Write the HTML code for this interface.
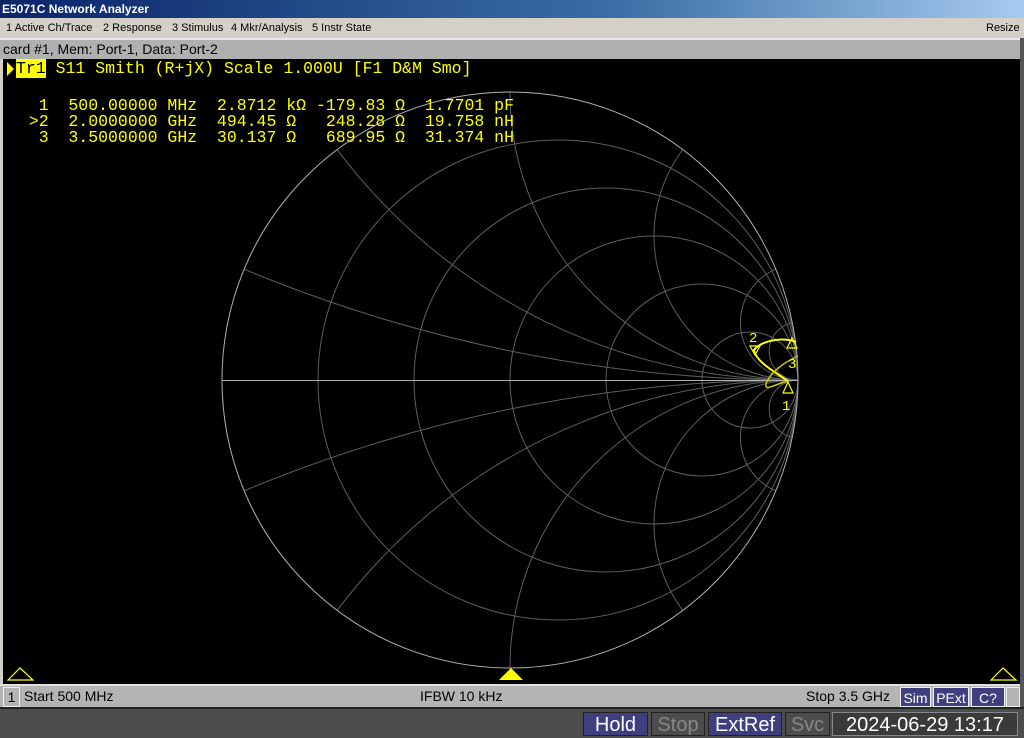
<!DOCTYPE html>
<html><head><meta charset="utf-8"><style>
*{margin:0;padding:0;box-sizing:border-box}
html,body{width:1024px;height:738px;overflow:hidden}
body{background:#d4d0c8;font-family:"Liberation Sans",sans-serif;position:relative}
.abs{position:absolute}
#title{left:0;top:0;width:1024px;height:18px;background:linear-gradient(90deg,#0a246a 0%,#3a6ea5 60%,#a6caf0 100%);color:#fff;font-weight:bold;font-size:12px;line-height:18px;padding-left:2px}
#menu{left:0;top:18px;width:1024px;height:20px;background:#d4d0c8;font-size:11px;line-height:20px;color:#000}
#menu span{position:absolute;top:0}
#card{left:0;top:38px;width:1020px;height:21px;background:#b0b0b0;border-top:2px solid #e8e8e8;font-size:14px;line-height:19px;padding-left:3px;color:#000}
#black{left:3px;top:59px;width:1017px;height:625px;background:#000}
.mono{font-family:"Liberation Mono",monospace;font-size:16.5px;color:#ffff00;white-space:pre;line-height:16px}
#status{left:0;top:684px;width:1020px;height:23px;background:#b4b4b4;border-top:2px solid #e0e0e0;font-size:14px;color:#000;line-height:21px}
#bottom{left:0;top:707px;width:1024px;height:31px;background:#4c4c4c;border-top:2px solid #222}
.btn{position:absolute;top:3px;height:24px;font-size:20px;line-height:24px;text-align:center;border:1px solid #222}
.sb{position:absolute;top:1px;height:20px;background:#3f3f80;color:#fff;font-size:14px;line-height:20px;text-align:center;border:1px solid #eee}
</style></head><body>
<div id="title" class="abs">E5071C Network Analyzer</div>
<div id="menu" class="abs">
<span style="left:6px">1 Active Ch/Trace</span><span style="left:103px">2 Response</span><span style="left:172px">3 Stimulus</span><span style="left:231px">4 Mkr/Analysis</span><span style="left:312px">5 Instr State</span><span style="left:986px">Resize</span>
</div>
<div id="card" class="abs">card #1, Mem: Port-1, Data: Port-2</div>
<div style="left:1020px;top:38px;width:4px;height:669px;background:#555" class="abs"></div>
<div id="black" class="abs"></div>
<svg class="abs" style="left:0;top:0" width="1024" height="738">
<defs><clipPath id="c"><circle cx="510" cy="380" r="288"/></clipPath></defs>
<g fill="none" stroke="#5e5e5e" stroke-width="1">
<g clip-path="url(#c)">
<circle cx="558" cy="380" r="240"/>
<circle cx="606" cy="380" r="192"/>
<circle cx="654" cy="380" r="144"/>
<circle cx="702" cy="380" r="96"/>
<circle cx="750" cy="380" r="48"/>
<circle cx="798" cy="-1060" r="1440"/><circle cx="798" cy="1820" r="1440"/>
<circle cx="798" cy="-196" r="576"/><circle cx="798" cy="956" r="576"/>
<circle cx="798" cy="92" r="288"/><circle cx="798" cy="668" r="288"/>
<circle cx="798" cy="236" r="144"/><circle cx="798" cy="524" r="144"/>
<circle cx="798" cy="322.4" r="57.6"/><circle cx="798" cy="437.6" r="57.6"/>
<circle cx="798" cy="351.2" r="28.8"/><circle cx="798" cy="408.8" r="28.8"/>
</g>
<circle cx="510" cy="380" r="288" stroke="#b0b0b0"/>
<line x1="222" y1="380.5" x2="798" y2="380.5" stroke="#b0b0b0"/>
</g>
<path d="M796,342 C780,336 760,342 754,350 C756,362 775,372 788,381" fill="none" stroke="#ffff00" stroke-width="2"/>
<path d="M788,381 C776,384 764,392 766,384 C770,372 785,362 798,356" fill="none" stroke="#c8c800" stroke-width="1.5"/>
<g fill="none" stroke="#ffff00" stroke-width="1.2">
<path d="M750,346 L760,346 L755,355 Z"/>
<path d="M792,338 L797,348 L787,348 Z"/>
<path d="M788,382 L793,393 L783,393 Z"/>
<path d="M8,680 L20,668 L33,680 Z"/>
<path d="M991,680 L1003,668 L1016,680 Z"/>
</g>
<path d="M499,680 L511,668 L523,680 Z" fill="#ffff00"/>
<path d="M7,62 L14,69 L7,76 Z" fill="#ffff00"/>
<g fill="#ffff00" font-family="Liberation Mono,monospace" font-size="14">
<text x="749" y="342">2</text><text x="788" y="368">3</text><text x="782" y="410">1</text>
</g>
</svg>
<div class="abs mono" style="left:16px;top:61px"><span style="background:#ffff00;color:#000">Tr1</span> S11 Smith (R+jX) Scale 1.000U [F1 D&amp;M Smo]</div>
<div class="abs mono" style="left:9px;top:98px">   1  500.00000 MHz  2.8712 kΩ -179.83 Ω  1.7701 pF
  >2  2.0000000 GHz  494.45 Ω   248.28 Ω  19.758 nH
   3  3.5000000 GHz  30.137 Ω   689.95 Ω  31.374 nH</div>
<div id="status" class="abs">
<span class="abs" style="left:3px;top:1px;width:17px;height:20px;border:1px solid #eee;text-align:center;line-height:18px">1</span>
<span class="abs" style="left:24px;top:0">Start 500 MHz</span>
<span class="abs" style="left:420px;top:0">IFBW 10 kHz</span>
<span class="abs" style="left:806px;top:0">Stop 3.5 GHz</span>
<span class="sb" style="left:900px;width:31px">Sim</span>
<span class="sb" style="left:933px;width:36px">PExt</span>
<span class="sb" style="left:971px;width:34px">C?</span>
<span class="abs" style="left:1006px;top:1px;width:14px;height:20px;border:1px solid #eee"></span>
</div>
<div id="bottom" class="abs">
<div class="btn" style="left:583px;width:65px;background:#3f3f80;color:#fff">Hold</div>
<div class="btn" style="left:651px;width:54px;background:#4c4c4c;color:#888">Stop</div>
<div class="btn" style="left:708px;width:74px;background:#3f3f80;color:#fff">ExtRef</div>
<div class="btn" style="left:785px;width:45px;background:#4c4c4c;color:#888">Svc</div>
<div class="btn" style="left:832px;width:186px;background:#3a3a3a;color:#fff;border-color:#888">2024-06-29 13:17</div>
</div>
</body></html>
